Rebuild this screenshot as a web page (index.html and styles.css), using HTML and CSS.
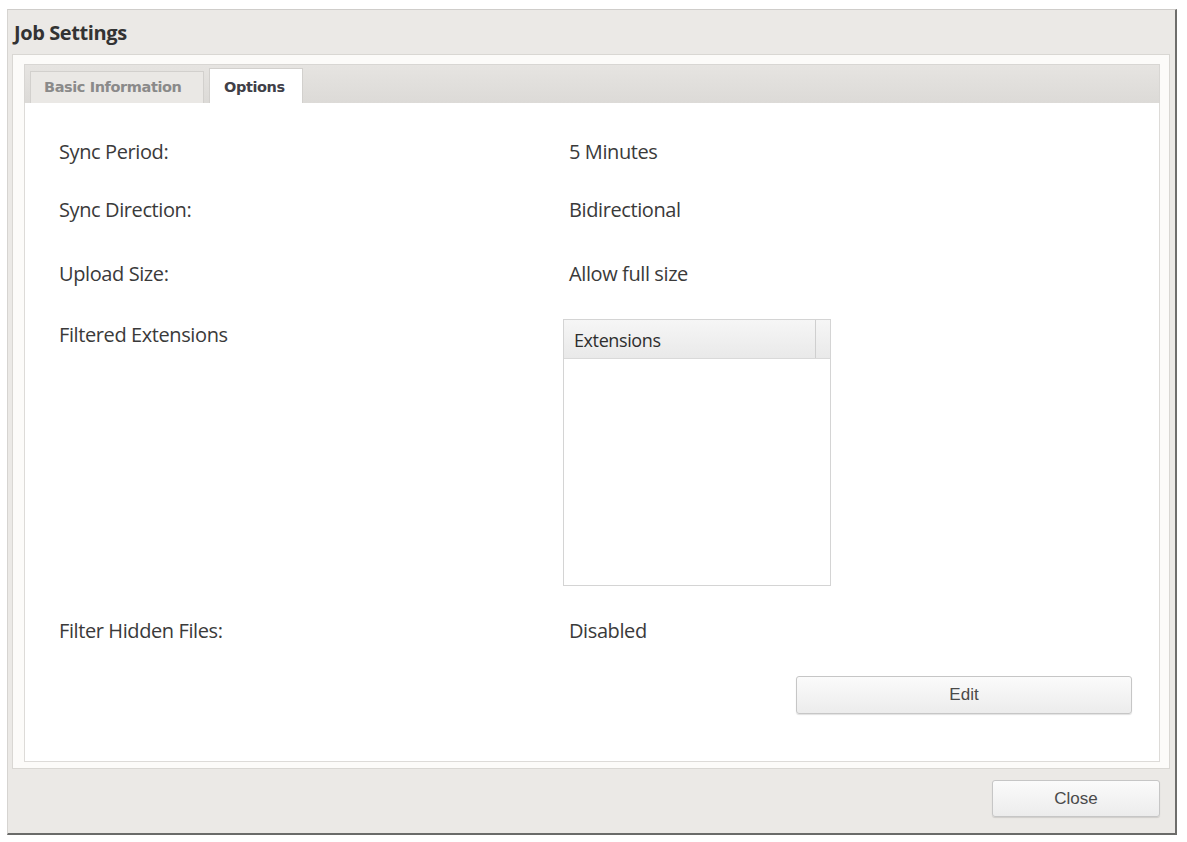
FILE: index.html
```html
<!DOCTYPE html>
<html>
<head>
<meta charset="utf-8">
<title>Job Settings</title>
<link rel="stylesheet" href="styles.css">
</head>
<body>
<div class="dialog">
  <div class="title">Job Settings</div>
  <div class="panel">
    <div class="tabstrip">
      <div class="tab">Basic Information</div>
      <div class="tab active">Options</div>
    </div>
    <div class="content">
      <div class="row r1">
        <div class="label">Sync Period:</div>
        <div class="value">5 Minutes</div>
      </div>
      <div class="row r2">
        <div class="label">Sync Direction:</div>
        <div class="value">Bidirectional</div>
      </div>
      <div class="row r3">
        <div class="label">Upload Size:</div>
        <div class="value">Allow full size</div>
      </div>
      <div class="row r4">
        <div class="label label-top">Filtered Extensions</div>
        <div class="grid">
          <div class="grid-head">
            <div class="grid-col">Extensions</div>
            <div class="grid-col-end"></div>
          </div>
          <div class="grid-body"></div>
        </div>
      </div>
      <div class="row r5">
        <div class="label">Filter Hidden Files:</div>
        <div class="value">Disabled</div>
      </div>
      <div class="actions">
        <button class="btn btn-edit">Edit</button>
      </div>
    </div>
  </div>
  <div class="footer">
    <button class="btn btn-close">Close</button>
  </div>
</div>
</body>
</html>
```

FILE: styles.css
```css
html, body {
  margin: 0;
  padding: 0;
  background: #ffffff;
}

.dialog {
  margin: 9px 0 0 7px;
  width: 1167px;
  height: 823px;
  background: #ebe9e6;
  border-top: 1px solid #cfcdca;
  border-left: 1px solid #d6d4d1;
  border-right: 2px solid #6e6e6c;
  border-bottom: 2px solid #6a6b69;
  display: flex;
  flex-direction: column;
  font-family: "Open Sans", "Liberation Sans", sans-serif;
}

.title {
  height: 44px;
  line-height: 46px;
  padding-left: 6px;
  font-weight: bold;
  font-size: 20px;
  color: #333333;
  letter-spacing: -0.4px;
}

.panel {
  margin: 0 5px 0 4px;
  height: 698px;
  background: #fcfbf9;
  border: 1px solid #d9d7d3;
  padding: 9px 9px 6px 11px;
  display: flex;
  flex-direction: column;
}

.tabstrip {
  height: 38px;
  background: linear-gradient(#e6e4e1, #dcdad7);
  border: 1px solid #d8d6d3;
  border-bottom: none;
  display: flex;
  align-items: flex-end;
  padding-left: 5px;
  gap: 5px;
}

.tab {
  height: 31px;
  line-height: 31px;
  padding: 0 0 0 13px;
  background: #eae8e5;
  border: 1px solid #d2d0cd;
  border-bottom: none;
  font-family: "DejaVu Sans", Verdana, sans-serif;
  font-weight: bold;
  font-size: 14.5px;
  color: #8a8a8a;
  letter-spacing: -0.4px;
  width: 159px;
  white-space: nowrap;
  overflow: hidden;
}

.tab.active {
  height: 34px;
  line-height: 37px;
  width: 78px;
  background: #ffffff;
  color: #404048;
  padding: 0 0 0 14px;
}

.content {
  flex: 1;
  background: #ffffff;
  border: 1px solid #dddbd8;
  border-top: none;
  padding: 37px 0 0 34px;
  display: flex;
  flex-direction: column;
}

.row {
  display: flex;
  align-items: flex-start;
  font-size: 20px;
  color: #3a3a3a;
  letter-spacing: -0.4px;
}

.label {
  width: 510px;
  line-height: 24px;
}

.value {
  line-height: 24px;
}

.r1 { margin-bottom: 34px; }
.r2 { margin-bottom: 40px; }
.r3 { margin-bottom: 33px; }
.r4 { margin-bottom: 33px; }
.r5 { margin-bottom: 33px; }

.label-top {
  padding-top: 4px;
  width: 504px;
}

.grid {
  width: 266px;
  height: 265px;
  border: 1px solid #d4d4d4;
  display: flex;
  flex-direction: column;
  background: #ffffff;
}

.grid-head {
  height: 38px;
  display: flex;
  background: linear-gradient(#f6f6f6, #e9e9e9);
  border-bottom: 1px solid #d9d9d9;
}

.grid-col {
  flex: 1;
  line-height: 40px;
  padding-left: 10px;
  font-size: 18px;
  color: #2e2e2e;
  border-right: 1px solid #cfcfcf;
}

.grid-col-end {
  width: 14px;
}

.grid-body {
  flex: 1;
}

.actions {
  display: flex;
  justify-content: flex-end;
  padding-right: 27px;
}

.btn {
  font-family: "Liberation Sans", Arial, sans-serif;
  font-size: 17px;
  color: #4a4a4a;
  background: linear-gradient(#fbfbfb, #ececec);
  border: 1px solid #c6c6c6;
  border-radius: 3px;
  box-shadow: 0 1px 1px rgba(0,0,0,0.12);
  padding: 0;
}

.btn-edit {
  width: 336px;
  height: 38px;
}

.footer {
  flex: 1;
  display: flex;
  justify-content: flex-end;
  align-items: flex-start;
  padding: 11px 15px 0 0;
}

.btn-close {
  width: 168px;
  height: 37px;
}
```
